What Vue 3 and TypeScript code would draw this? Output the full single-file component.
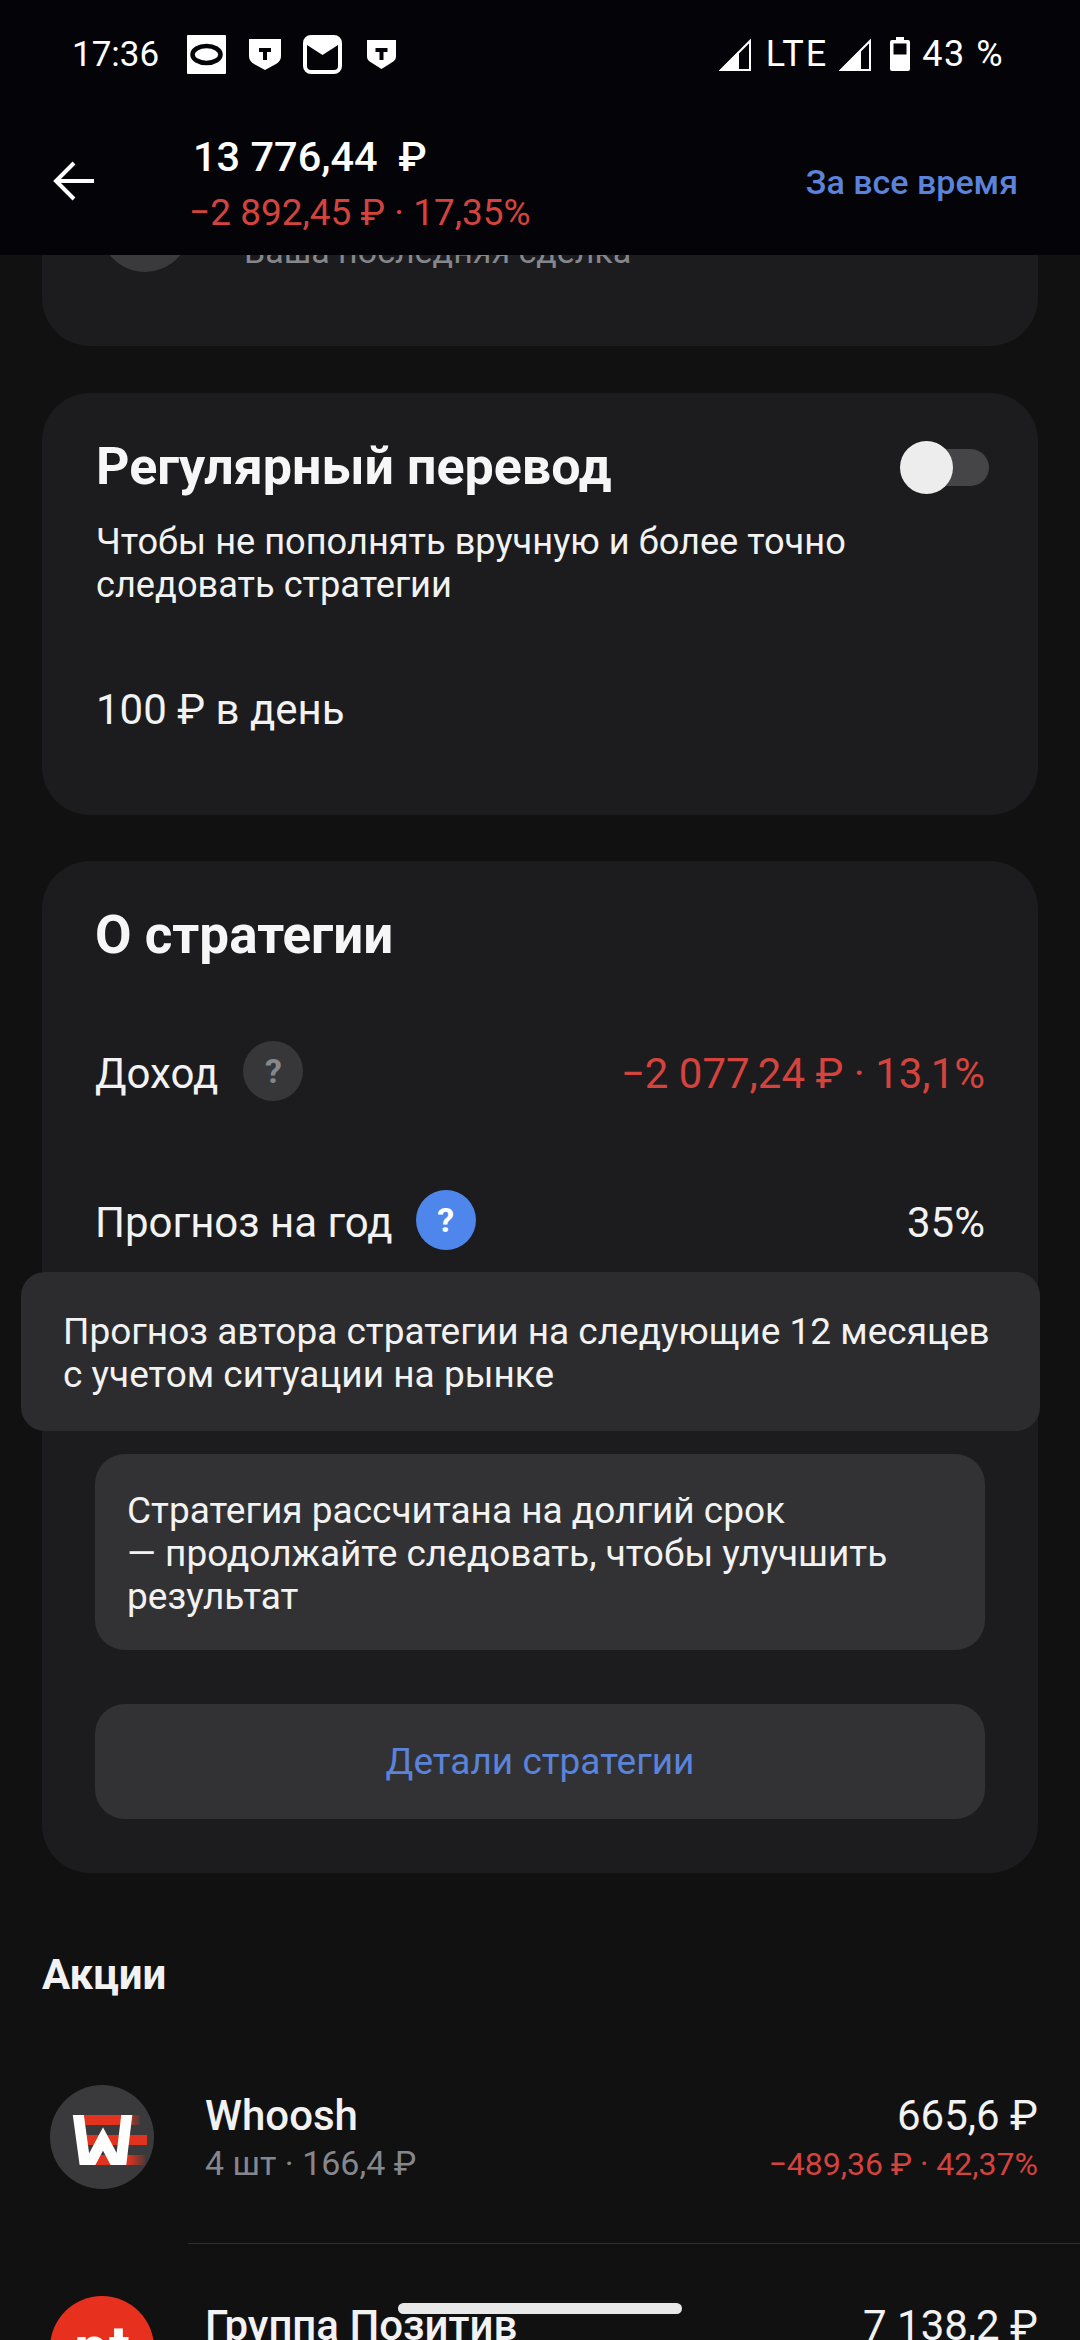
<script setup lang="ts">
// Portfolio strategy screen, scrolled so the first card sits under the header.
interface Stock {
  name: string
  sub: string
  price: string
  change?: string
}

const stocks: Stock[] = [
  { name: 'Whoosh', sub: '4 шт · 166,4 ₽', price: '665,6 ₽', change: '−489,36 ₽ · 42,37%' },
  { name: 'Группа Позитив', sub: '', price: '7 138,2 ₽' },
]
</script>

<template>
  <div class="page">
    <header class="header">
      <div class="status">
        <span class="time">17:36</span>
        <svg class="ntf ntf-o" viewBox="0 0 39 39">
          <rect width="39" height="39" rx="1" fill="#fff" />
          <ellipse cx="19.500" cy="19.500" rx="14" ry="8.500" fill="none" stroke="#040308" stroke-width="4.500" />
        </svg>
        <svg class="ntf ntf-t1" viewBox="0 0 32 32">
          <path d="M0 1h32v17c0 4-2 6-5 8l-11 6-11-6c-3-2-5-4-5-8z" fill="#fff" />
          <path d="M10 10h12v4h-4v8h-4v-8h-4z" fill="#040308" />
        </svg>
        <svg class="ntf ntf-m" viewBox="0 0 39 39">
          <rect x="2" y="2" width="35" height="35" rx="6" fill="#040308" stroke="#fff" stroke-width="4" />
          <path d="M4 2h31v8L19.500 20 4 10z" fill="#fff" />
        </svg>
        <svg class="ntf ntf-t2" viewBox="0 0 29 30">
          <path d="M0 1h29v16c0 4-2 5-5 7l-9.500 6L5 24c-3-2-5-3-5-7z" fill="#fff" />
          <path d="M8.500 9h12v4h-4v8h-4v-8h-4z" fill="#040308" />
        </svg>
        <div class="status-right">
          <svg class="signal" viewBox="0 0 33 33">
            <path d="M31 3v29H2z" fill="none" stroke="#fff" stroke-width="2" />
            <path d="M0 33 20 13v20z" fill="#fff" />
          </svg>
          <span class="lte">LTE</span>
          <svg class="signal signal-b" viewBox="0 0 33 33">
            <path d="M31 3v29H2z" fill="none" stroke="#fff" stroke-width="2" />
            <path d="M0 33 22 11v22z" fill="#fff" />
          </svg>
          <svg class="battery" viewBox="0 0 20 34">
            <path d="M6 0h8v3h4a2 2 0 0 1 2 2v27a2 2 0 0 1-2 2H2a2 2 0 0 1-2-2V5a2 2 0 0 1 2-2h4z" fill="#fff" />
            <rect x="3.500" y="6.500" width="13" height="11" fill="#040308" />
          </svg>
          <span class="percent">43 %</span>
        </div>
      </div>
      <div class="topbar">
        <svg class="back" viewBox="0 0 42 42">
          <path d="M41 21H3M21 3 3 21l18 18" fill="none" stroke="#fff" stroke-width="4" />
        </svg>
        <div class="summary">
          <div class="total">13 776,44&nbsp; ₽</div>
          <div class="delta">−2 892,45 ₽ · 17,35%</div>
        </div>
        <span class="period">За все время</span>
      </div>
    </header>

    <main class="scroll">
      <section class="card card-deal">
        <span class="deal-avatar"></span>
        <span class="deal-text">Ваша последняя сделка</span>
      </section>

      <section class="card card-regular">
        <div class="regular-head">
          <h2 class="card-title">Регулярный перевод</h2>
          <span class="toggle"><span class="thumb"></span></span>
        </div>
        <p class="regular-desc">Чтобы не пополнять вручную и более точно<br />следовать стратегии</p>
        <p class="regular-amount">100 ₽ в день</p>
      </section>

      <section class="card card-about">
        <h2 class="card-title">О стратегии</h2>
        <div class="stat stat-income">
          <span class="stat-label">Доход</span>
          <span class="help">?</span>
          <span class="stat-value red">−2 077,24 ₽ · 13,1%</span>
        </div>
        <div class="stat stat-forecast">
          <span class="stat-label">Прогноз на год</span>
          <span class="help help-active">?</span>
          <span class="stat-value">35%</span>
        </div>
        <div class="note">Стратегия рассчитана на долгий срок<br />— продолжайте следовать, чтобы улучшить результат</div>
        <button class="details" type="button">Детали стратегии</button>
      </section>

      <h3 class="section-title">Акции</h3>

      <div class="stocks">
        <div v-for="(stock, i) in stocks" :key="stock.name" class="stock">
          <div class="logo" :class="i === 0 ? 'logo-whoosh' : 'logo-pt'">
            <svg v-if="i === 0" viewBox="0 0 104 104" width="104" height="104">
              <defs>
                <linearGradient id="fade" x1="0" x2="1" y1="0" y2="0">
                  <stop offset="0.72" stop-color="#e2331f" />
                  <stop offset="1" stop-color="#e2331f" stop-opacity="0.15" />
                </linearGradient>
                <clipPath id="w-clip"><rect x="0" y="30" width="104" height="50" /></clipPath>
              </defs>
              <rect x="34" y="30" width="56" height="10" fill="url(#fade)" />
              <rect x="34" y="50" width="63" height="10" fill="#e2331f" />
              <rect x="34" y="70" width="61" height="10" fill="url(#fade)" />
              <path d="M27.500 24 36 86 53 54 70 86 77.500 24" fill="none" stroke="#fff" stroke-width="11" clip-path="url(#w-clip)" />
            </svg>
            <span v-else class="pt">pt</span>
          </div>
          <div class="stock-main">
            <div class="stock-name">{{ stock.name }}</div>
            <div v-if="stock.sub" class="stock-sub">{{ stock.sub }}</div>
          </div>
          <div class="stock-side">
            <div class="stock-price">{{ stock.price }}</div>
            <div v-if="stock.change" class="stock-change">{{ stock.change }}</div>
          </div>
        </div>
      </div>
    </main>

    <div class="tooltip">Прогноз автора стратегии на следующие 12 месяцев<br />с учетом ситуации на рынке</div>
    <div class="home-bar"></div>
  </div>
</template>

<style>
html,
body {
  margin: 0;
  background: #111112;
}
</style>

<style scoped>
.page {
  position: relative;
  display: flex;
  flex-direction: column;
  width: 1080px;
  height: 2340px;
  overflow: hidden;
  background: #111112;
  color: #f2f2f3;
  font-family: Roboto, 'Noto Sans', sans-serif;
}
.header {
  flex: none;
  height: 255px;
  background: #040308;
  color: #fff;
}
.status {
  display: flex;
  align-items: center;
  height: 54px;
  padding: 27px 76px 0 72px;
}
.time {
  width: 115px;
  font-size: 35px;
}
.ntf {
  flex: none;
}
.ntf-o {
  width: 39px;
  height: 39px;
}
.ntf-t1 {
  width: 32px;
  height: 32px;
  margin-left: 23px;
}
.ntf-m {
  width: 39px;
  height: 39px;
  margin-left: 22px;
}
.ntf-t2 {
  width: 29px;
  height: 30px;
  margin-left: 25px;
}
.status-right {
  display: flex;
  align-items: center;
  margin-left: auto;
  font-size: 36px;
}
.signal {
  width: 33px;
  height: 33px;
}
.lte {
  margin-left: 14px;
  letter-spacing: 2px;
}
.signal-b {
  margin-left: 11px;
}
.battery {
  width: 20px;
  height: 34px;
  margin-left: 18px;
}
.percent {
  margin-left: 12px;
  letter-spacing: 1.500px;
}
.topbar {
  display: flex;
  align-items: center;
  box-sizing: border-box;
  height: 174px;
  padding: 33px 62px 0 53px;
}
.back {
  width: 42px;
  height: 42px;
  margin-top: -7px;
}
.summary {
  margin-left: 94px;
}
.total {
  padding-left: 4px;
  font-size: 41.500px;
  font-weight: 500;
  line-height: 53px;
}
.delta {
  margin-top: 3px;
  font-size: 37px;
  line-height: 53px;
  color: #d4433d;
}
.period {
  margin-left: auto;
  margin-bottom: 6px;
  font-size: 34px;
  font-weight: 500;
  color: #5b83d9;
}
.scroll {
  flex: 1;
  min-height: 0;
  overflow: hidden;
}
.card {
  margin: 0 42px;
  border-radius: 48px;
  background: #1c1c1e;
}
.card-deal {
  display: flex;
  gap: 54px;
  box-sizing: border-box;
  height: 220px;
  margin-top: -129px;
  padding: 56px 0 0 58px;
}
.deal-avatar {
  flex: none;
  width: 90px;
  height: 90px;
  border-radius: 50%;
  background: #3a3a3c;
}
.deal-text {
  margin-top: 50px;
  font-size: 34px;
  line-height: 38px;
  color: #85878c;
}
.card-regular {
  box-sizing: border-box;
  height: 422px;
  margin-top: 47px;
  padding: 44px 49px 0 54px;
}
.regular-head {
  display: flex;
  justify-content: space-between;
  align-items: center;
}
.card-title {
  margin: 0;
  font-size: 52px;
  font-weight: 700;
  line-height: 60px;
  color: #f6f6f7;
}
.card-about .card-title {
  font-size: 53px;
}
.toggle {
  position: relative;
  display: block;
  width: 84px;
  height: 37px;
  border-radius: 19px;
  background: #454547;
}
.thumb {
  position: absolute;
  top: -8px;
  left: -5px;
  width: 53px;
  height: 53px;
  border-radius: 50%;
  background: #ededed;
}
.regular-desc {
  margin: 23px 0 0;
  font-size: 36.200px;
  line-height: 43px;
}
.regular-amount {
  margin: 81px 0 0;
  font-size: 42px;
  line-height: 46px;
}
.card-about {
  box-sizing: border-box;
  height: 1012px;
  margin-top: 46px;
  padding: 44px 53px 0;
}
.stat {
  display: flex;
  align-items: center;
  height: 60px;
}
.stat-income {
  margin-top: 76px;
}
.stat-forecast {
  margin-top: 89px;
}
.stat-label {
  padding-top: 4px;
  font-size: 42px;
}
.help {
  display: flex;
  align-items: center;
  justify-content: center;
  width: 60px;
  height: 60px;
  margin-left: 23px;
  border-radius: 50%;
  background: #37373a;
  color: #85878c;
  font-size: 34px;
  font-weight: 700;
}
.stat-income .help {
  margin-left: 25px;
}
.help-active {
  background: #4e86ec;
  color: #fff;
}
.stat-value {
  margin-left: auto;
  padding-top: 4px;
  font-size: 42px;
}
.red {
  color: #d4433d;
}
.note {
  box-sizing: border-box;
  height: 196px;
  margin-top: 204px;
  padding: 35px 32px 0;
  border-radius: 30px;
  background: #323234;
  font-size: 37px;
  line-height: 43px;
}
.details {
  display: block;
  width: 100%;
  height: 115px;
  margin-top: 54px;
  padding: 0;
  border: none;
  border-radius: 30px;
  background: #323234;
  color: #5b83d9;
  font-family: inherit;
  font-size: 37px;
}
.section-title {
  margin: 76px 0 0 42px;
  font-size: 42px;
  font-weight: 700;
  line-height: 52px;
}
.stocks {
  margin-top: 84px;
}
.stock {
  position: relative;
  display: flex;
  padding: 0 42px 0 50px;
}
.stock:first-child {
  height: 158px;
}
.stock + .stock::before {
  content: '';
  position: absolute;
  top: 0;
  left: 188px;
  right: 0;
  height: 1px;
  background: #2f2f31;
}
.logo {
  flex: none;
  display: flex;
  justify-content: center;
  width: 104px;
  height: 104px;
  border-radius: 50%;
  overflow: hidden;
}
.logo-whoosh {
  background: #3a3a3c;
}
.logo-pt {
  margin-top: 53px;
  background: #e8301f;
}
.pt {
  color: #fff;
  font-size: 62px;
  font-weight: 700;
  line-height: 104px;
}
.stock-main {
  margin-left: 51px;
}
.stock:first-child .stock-main,
.stock:first-child .stock-side {
  margin-top: 6px;
}
.stock + .stock .stock-main,
.stock + .stock .stock-side {
  margin-top: 58px;
}
.stock-name {
  font-size: 42px;
  font-weight: 500;
  line-height: 50px;
}
.stock-sub {
  font-size: 34px;
  line-height: 45px;
  color: #85878c;
}
.stock-side {
  margin-left: auto;
  text-align: right;
}
.stock-price {
  font-size: 42px;
  line-height: 50px;
}
.stock-change {
  font-size: 32px;
  line-height: 47px;
  color: #d4433d;
}
.tooltip {
  position: absolute;
  top: 1272px;
  left: 21px;
  box-sizing: border-box;
  width: 1019px;
  height: 159px;
  padding: 38px 42px 0;
  border-radius: 24px;
  background: #2c2c2e;
  font-size: 37px;
  line-height: 43px;
}
.home-bar {
  position: absolute;
  top: 2303px;
  left: 398px;
  width: 284px;
  height: 11px;
  border-radius: 6px;
  background: #e8e8e8;
}
</style>
